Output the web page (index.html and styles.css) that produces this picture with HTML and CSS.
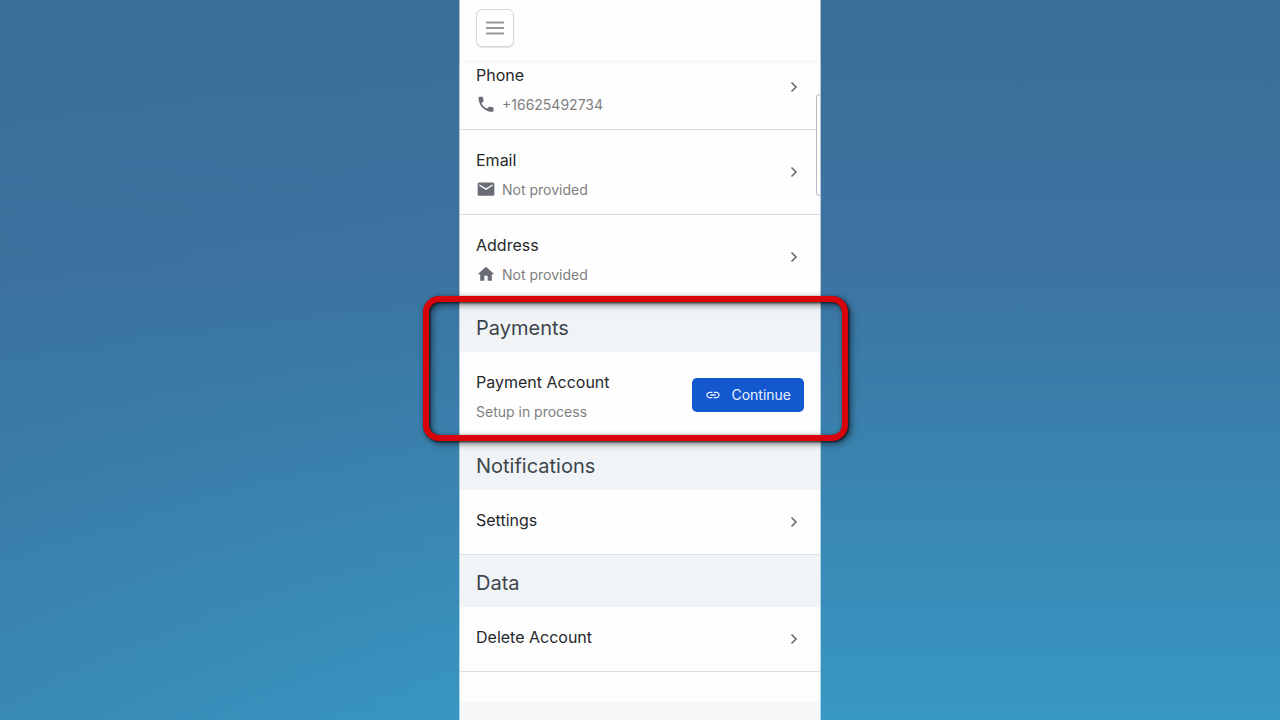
FILE: index.html
```html
<!DOCTYPE html>
<html lang="en">
<head>
  <meta charset="utf-8">
  <meta name="viewport" content="width=device-width, initial-scale=1">
  <title>Account</title>
  <link rel="stylesheet" href="styles.css">
</head>
<body>
  <div class="phone">
    <header class="topbar">
      <button class="menu" aria-label="Menu">
        <svg width="24" height="24" viewBox="0 0 24 24"><path d="M3 6.500h18M3 12h18M3 17.500h18"/></svg>
      </button>
    </header>
    <main>
      <section class="contact">
        <a class="row" href="#phone">
          <span class="text">
            <span class="label">Phone</span>
            <span class="detail">
              <svg class="icon" viewBox="0 0 24 24"><path d="M6.600 10c1.400 2.800 3.800 5.100 6.600 6.600l2.200-2.200c.3-.3.7-.4 1-.2 1.100.4 2.300.6 3.600.6.600 0 1 .4 1 1V19.200c0 .6-.4 1-1 1C10.600 20.200 3 12.600 3 3.200c0-.6.5-1 1-1h3.500c.6 0 1 .4 1 1 0 1.300.2 2.500.6 3.600.1.300 0 .7-.2 1z"/></svg>
              +16625492734
            </span>
          </span>
          <svg class="chevron" viewBox="0 0 20 20"><path d="M7.500 5.500l4.500 4.500-4.500 4.500"/></svg>
        </a>
        <a class="row" href="#email">
          <span class="text">
            <span class="label">Email</span>
            <span class="detail">
              <svg class="icon" viewBox="0 0 24 24"><path d="M20 3H4c-1.100 0-2 .9-2 2v12c0 1.100.9 2 2 2h16c1.100 0 2-.9 2-2V5c0-1.100-.9-2-2-2zm0 4l-8 5-8-5V5l8 5 8-5v2z"/></svg>
              Not provided
            </span>
          </span>
          <svg class="chevron" viewBox="0 0 20 20"><path d="M7.500 5.500l4.500 4.500-4.500 4.500"/></svg>
        </a>
        <a class="row" href="#address">
          <span class="text">
            <span class="label">Address</span>
            <span class="detail">
              <svg class="icon" viewBox="0 0 24 24"><path d="M10 19v-6h4v6h5v-8h3L12 2 2 11h3v8z"/></svg>
              Not provided
            </span>
          </span>
          <svg class="chevron" viewBox="0 0 20 20"><path d="M7.500 5.500l4.500 4.500-4.500 4.500"/></svg>
        </a>
      </section>
      <section class="payments">
        <h2>Payments</h2>
        <div class="row">
          <span class="text">
            <span class="label">Payment Account</span>
            <span class="detail">Setup in process</span>
          </span>
          <button class="continue">
            <svg width="16" height="16" viewBox="0 0 24 24"><path d="M3.900 12c0-1.710 1.390-3.100 3.100-3.100h4V7H7c-2.760 0-5 2.240-5 5s2.240 5 5 5h4v-1.900H7c-1.710 0-3.100-1.390-3.100-3.100zM8 13h8v-2H8v2zm9-6h-4v1.900h4c1.710 0 3.100 1.390 3.100 3.100s-1.390 3.100-3.100 3.100h-4V17h4c2.760 0 5-2.240 5-5s-2.240-5-5-5z"/></svg>
            Continue
          </button>
        </div>
        <div class="highlight"></div>
      </section>
      <section>
        <h2>Notifications</h2>
        <a class="row" href="#settings">
          <span class="text"><span class="label">Settings</span></span>
          <svg class="chevron" viewBox="0 0 20 20"><path d="M7.500 5.500l4.500 4.500-4.500 4.500"/></svg>
        </a>
      </section>
      <section>
        <h2>Data</h2>
        <a class="row" href="#delete">
          <span class="text"><span class="label">Delete Account</span></span>
          <svg class="chevron" viewBox="0 0 20 20"><path d="M7.500 5.500l4.500 4.500-4.500 4.500"/></svg>
        </a>
      </section>
    </main>
    <footer></footer>
    <div class="edge-tab"></div>
  </div>
</body>
</html>
```

FILE: styles.css
```css
* {
  box-sizing: border-box;
}
body {
  margin: 0;
  height: 100vh;
  overflow: hidden;
  font-family: Inter, "Liberation Sans", sans-serif;
  background:
    linear-gradient(90deg, rgba(59, 109, 153, 0.35), transparent 40%),
    linear-gradient(180deg, #3b6d99 0%, #3d74a2 38%, #3a79a6 46%, #3a85b1 68%, #3798c3 100%);
}
.phone {
  position: relative;
  display: flex;
  flex-direction: column;
  width: 100%;
  max-width: 360px;
  height: 100vh;
  margin: 0 auto;
  background: #fefefe;
  box-shadow: 0 0 0 1px rgba(255, 255, 255, 0.6);
}
.topbar {
  position: relative;
  z-index: 1;
  flex: none;
  padding: 9px 16px 13px;
  background: #fefefe;
  box-shadow: 0 2px 6px rgba(0, 0, 0, 0.03);
}
.menu {
  display: flex;
  align-items: center;
  justify-content: center;
  width: 38px;
  height: 38px;
  padding: 0;
  border: 1px solid #d6d8d8;
  border-radius: 6px;
  background: #fff;
  box-shadow: 0 1px 1px rgba(0, 0, 0, 0.12);
}
.menu path {
  fill: none;
  stroke: #929b9a;
  stroke-width: 2;
}

/* the list is scrolled a little way under the top bar */
.contact {
  margin-top: -15px;
}
.row {
  display: flex;
  align-items: center;
  justify-content: space-between;
  min-height: 65px;
  padding: 0 16px;
  border-bottom: 1px solid #dcdfe1;
  color: #25282b;
  text-decoration: none;
}
.contact .row:last-child,
.payments .row {
  border-bottom-color: transparent;
}
.payments .row {
  min-height: 86px;
}
.text {
  display: flex;
  flex-direction: column;
  gap: 8px;
  align-self: flex-start;
  padding: 18px 0 14px;
}
.label {
  font-size: 16px;
  line-height: 24px;
}
.detail {
  display: flex;
  align-items: center;
  gap: 6px;
  font-size: 14px;
  line-height: 20px;
  color: #7e7f80;
}
.icon {
  width: 20px;
  height: 20px;
  fill: #696c75;
}
.chevron {
  width: 20px;
  height: 20px;
  fill: none;
  stroke: #6a6a6c;
  stroke-width: 1.6;
}
h2 {
  margin: 0;
  padding: 14px 16px 10px;
  font-size: 20px;
  font-weight: 400;
  line-height: 28px;
  color: #3e444b;
  background: #f0f4f6;
}
.continue {
  display: flex;
  align-items: center;
  gap: 10px;
  height: 34px;
  padding: 0 13px;
  border: 0;
  border-radius: 5px;
  background: #1458d0;
  color: #e8f1ff;
  font-family: inherit;
  font-size: 14px;
}
.continue svg {
  fill: currentColor;
}
.payments {
  position: relative;
}
.highlight {
  position: absolute;
  z-index: 2;
  inset: -4px -28px -3px -37px;
  border: 6px solid #d9040b;
  border-radius: 16px;
  filter: drop-shadow(1px 1px 1px rgba(0, 0, 0, 0.8)) drop-shadow(2px 2px 3px rgba(0, 0, 0, 0.5));
  pointer-events: none;
}
footer {
  flex: 1;
  margin-top: 30px;
  background: #f5f6f8;
}
.edge-tab {
  position: absolute;
  top: 94px;
  right: 0;
  width: 4px;
  height: 102px;
  border: 1px solid #b9bcbe;
  border-right: 0;
  border-radius: 5px 0 0 5px;
  background: #fefefe;
}
```
